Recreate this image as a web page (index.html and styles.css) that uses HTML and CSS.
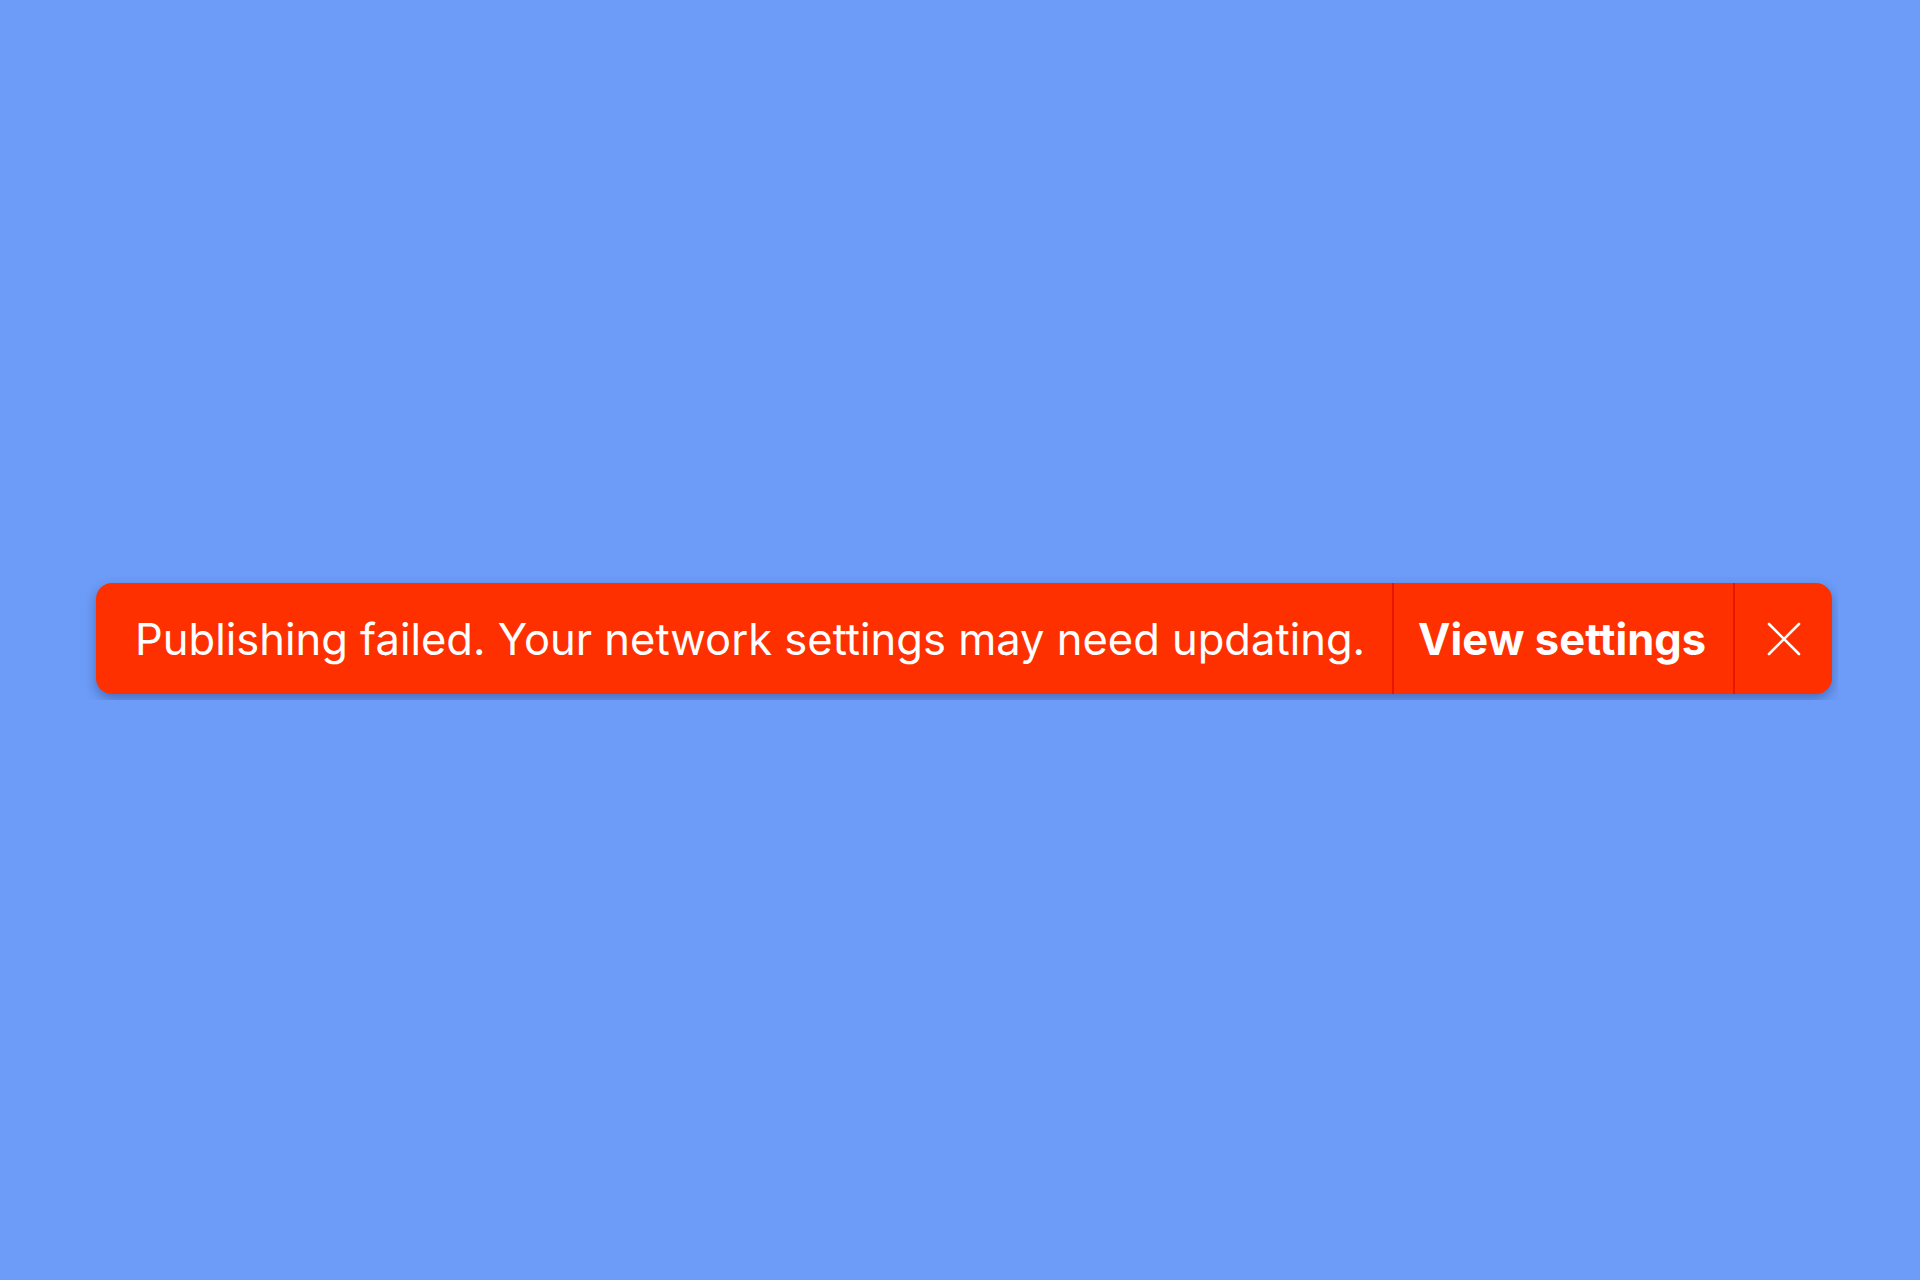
FILE: index.html
```html
<!DOCTYPE html>
<html lang="en">
<head>
<meta charset="utf-8">
<title>Publishing failed</title>
<link rel="stylesheet" href="styles.css">
</head>
<body>
<div class="stage">
  <div class="clip">
    <div class="banner" role="alert">
      <div class="msg">Publishing failed. Your network settings may need updating.</div>
      <button class="action" type="button">View settings</button>
      <button class="close" type="button" aria-label="Close">
        <svg width="34" height="34" viewBox="0 0 34 34" fill="none" stroke="#fff" stroke-width="2.6" stroke-linecap="round">
          <path d="M2 2 L32 32 M32 2 L2 32"/>
        </svg>
      </button>
    </div>
  </div>
</div>
</body>
</html>
```

FILE: styles.css
```css
html, body {
  margin: 0;
  padding: 0;
}
body {
  background: #6c9cf7;
  width: 1920px;
  height: 1280px;
  font-family: Inter, "Noto Sans", sans-serif;
}
.stage {
  padding-top: 567px;
  padding-left: 80px;
}
.clip {
  box-sizing: border-box;
  width: 1758px;
  padding: 16px 6px 6px 16px;
  overflow: hidden;
}
.banner {
  display: flex;
  height: 111px;
  background: #ff3000;
  border-radius: 16px;
  box-shadow: 0 5px 12px rgba(20, 40, 110, 0.4);
  color: #fff;
}
.msg {
  box-sizing: border-box;
  width: 1296px;
  padding-left: 39px;
  display: flex;
  align-items: center;
  font-size: 43.5px;
  font-weight: 400;
  white-space: nowrap;
}
.action, .close {
  box-sizing: border-box;
  border: 0;
  border-left: 2px solid #e81600;
  background: transparent;
  color: #fff;
  font-family: inherit;
  display: flex;
  align-items: center;
  padding: 0;
  margin: 0;
  cursor: pointer;
}
.action {
  width: 341px;
  padding-left: 24px;
  font-size: 43.5px;
  font-weight: 700;
  white-space: nowrap;
}
.close {
  width: 99px;
  justify-content: center;
}
```
